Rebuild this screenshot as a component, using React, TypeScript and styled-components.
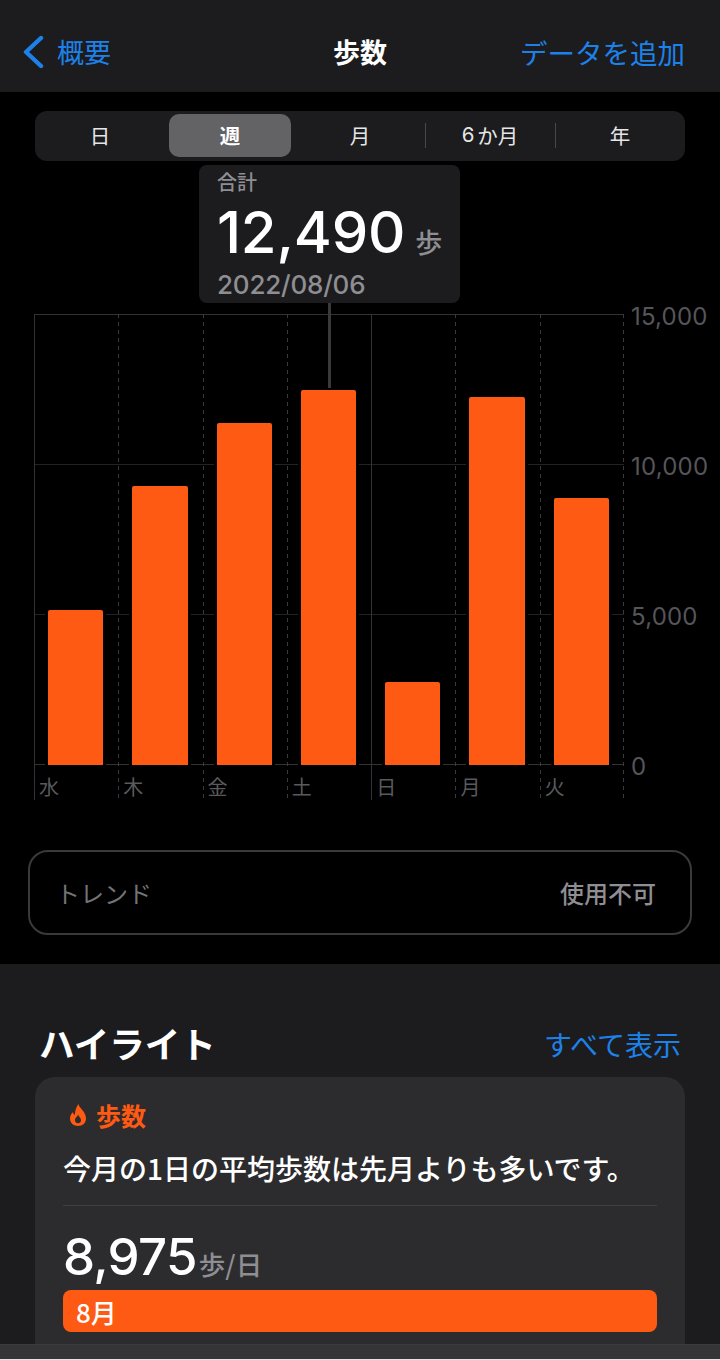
import React from "react";
import styled, { createGlobalStyle } from "styled-components";

const Global = createGlobalStyle`
  html, body { margin: 0; padding: 0; background: #000; }
  body { font-family: "Liberation Sans", "Noto Sans CJK JP", sans-serif; }
  * { box-sizing: border-box; }
`;
const jp = `"Noto Sans CJK JP", sans-serif`;
const num = `Inter, "Noto Sans CJK JP", sans-serif`;
const blue = "#1c82ea";
const orange = "#ff5a13";
const dashed = `linear-gradient(to bottom, #3a3a3c 50%, transparent 50%)`;

const Page = styled.div`
  width: 720px; height: 1360px; overflow: hidden; display: flex; flex-direction: column;
  background: #000; position: relative;
`;
const NavBar = styled.header`
  height: 92px; flex: none; background: #1c1c1e; display: grid;
  grid-template-columns: 1fr auto 1fr; align-items: center; padding: 12px 35px 0;
  font-family: ${jp}; font-size: 27px; line-height: 32px;
`;
const Back = styled.div`
  display: flex; align-items: center; gap: 13px; color: ${blue}; font-weight: 400; margin-left: -13px;
`;
const NavTitle = styled.div` color: #fff; font-weight: 700; `;
const NavAction = styled.div` color: ${blue}; font-weight: 400; font-size: 27.5px; text-align: right; white-space: nowrap; `;

const Main = styled.section`
  height: 872px; flex: none; background: #000; padding: 19px 35px 0;
  display: flex; flex-direction: column;
`;
const Segments = styled.div`
  height: 50px; background: #1c1c1e; border-radius: 12px; display: grid;
  grid-template-columns: repeat(5, 1fr); padding: 3px 0 4px; align-items: stretch;
`;
const Segment = styled.div<{ $active?: boolean; $divider?: boolean }>`
  position: relative; display: flex; align-items: center; justify-content: center;
  font-family: ${jp}; font-size: 20.5px; margin: 0 4px; border-radius: 10px; padding-bottom: 2px;
  background: ${(p) => (p.$active ? "#636366" : "transparent")};
  font-weight: ${(p) => (p.$active ? 700 : 400)};
  color: ${(p) => (p.$active ? "#fff" : "#e6e6e7")};
  &::before {
    content: ""; display: ${(p) => (p.$divider ? "block" : "none")};
    position: absolute; left: -4px; top: 9px; bottom: 9px; width: 1px; background: #48484a;
  }
`;
const SixDigit = styled.span` font-family: ${num}; margin-right: 3px; `;

const Tooltip = styled.div`
  align-self: flex-start; margin: 4px 0 0 164px; width: 261px; height: 138px;
  background: #1c1c1e; border-radius: 8px; padding: 4px 18px 0; position: relative; z-index: 2;
  &::after {
    content: ""; position: absolute; left: 129px; top: 100%; width: 3px; height: 85px;
    background: #3a3a3c;
  }
`;
const TipLabel = styled.div`
  font-family: ${jp}; font-size: 20px; line-height: 26px; color: #8e8e93; font-weight: 500;
`;
const TipValueRow = styled.div`
  display: flex; align-items: baseline; gap: 10px; height: 62px; margin-top: 6px;
`;
const TipValue = styled.span`
  font-family: ${num}; font-size: 58px; line-height: 62px; color: #fff; font-weight: 500; letter-spacing: -0.2px;
`;
const TipUnit = styled.span`
  font-family: ${jp}; font-size: 27px; color: #8e8e93; font-weight: 500;
`;
const TipDate = styled.div`
  font-family: ${num}; font-size: 26px; line-height: 34px; color: #8e8e93; font-weight: 500; margin-top: 5px; letter-spacing: -0.2px;
`;

const ChartRow = styled.div`
  display: flex; margin-top: 11px; margin-left: -1px; height: 484px;
`;
const Plot = styled.div`
  width: 590px; flex: none; height: 484px; position: relative;
  display: grid; grid-template-columns: repeat(7, 1fr);
  &::after {
    content: ""; position: absolute; right: 0; top: 0; bottom: 0; width: 1px;
    background: ${dashed} 0 0 / 1px 8px repeat-y;
  }
`;
const HLines = styled.div`
  position: absolute; left: 0; right: 0; top: 0; height: 451px; display: flex;
  flex-direction: column; justify-content: space-between; pointer-events: none;
`;
const HLine = styled.div<{ $strong?: boolean }>`
  height: 1px; background: ${(p) => (p.$strong ? "#333335" : "#232325")};
`;
const DayCol = styled.div<{ $solid?: boolean }>`
  position: relative; display: flex; flex-direction: column; padding-left: 1px;
  background: ${(p) => (p.$solid ? "linear-gradient(#333335, #333335) 0 0 / 1px 100% no-repeat" : `${dashed} 0 0 / 1px 8px repeat-y`)};
`;
const BarSlot = styled.div`
  height: 451px; display: flex; align-items: flex-end; padding: 0 15px 0 13px;
`;
const Bar = styled.div`
  width: 100%; background: ${orange}; border-radius: 2px 2px 0 0; position: relative;
  box-shadow: 0 0 0 3px #000;
`;
const DayLabel = styled.div`
  font-family: ${jp}; font-size: 20px; line-height: 26px; color: #5a5a5e; padding-left: 4px; margin-top: 9px;
`;
const YAxis = styled.div`
  height: 451px; display: flex; flex-direction: column; justify-content: space-between;
  margin: 1.5px 0 0 7px;
`;
const YTick = styled.div`
  font-family: ${num}; font-size: 24px; line-height: 1px; height: 1px; color: #55555a; font-weight: 400; letter-spacing: 0.2px;
`;

const Trend = styled.div`
  margin: 52px -7px 0; height: 85px; border: 2px solid #3a3a3c; border-radius: 20px;
  display: flex; align-items: center; justify-content: space-between; padding: 0 34px 0 26px;
  font-family: ${jp}; font-size: 24px;
`;
const TrendLabel = styled.span` color: #737377; font-weight: 400; `;
const TrendValue = styled.span` color: #8e8e93; font-weight: 500; `;

const Lower = styled.section`
  flex: 1; min-height: 0; background: #1c1c1e; padding: 54px 35px 0; display: flex; flex-direction: column; position: relative;
`;
const LowerHead = styled.div`
  display: flex; align-items: center; justify-content: space-between; height: 50px; padding: 0 4px 0 4px;
`;
const LowerTitle = styled.h2`
  margin: 0; font-family: ${jp}; font-size: 35.5px; line-height: 50px; color: #fff; font-weight: 700;
`;
const LowerLink = styled.a` font-family: ${jp}; font-size: 28px; color: ${blue}; font-weight: 400; margin-top: 2px; `;
const Card = styled.div`
  margin-top: 9px; flex: 1; min-height: 0; background: #2c2c2e; border-radius: 20px 20px 0 0; padding: 20px 28px 0;
`;
const CardHead = styled.div`
  display: flex; align-items: center; gap: 8px; height: 36px; padding-left: 5px;
  font-family: ${jp}; font-size: 25px; font-weight: 700; color: ${orange};
`;
const CardText = styled.p`
  margin: 15px 0 0; font-family: ${jp}; font-size: 28px; line-height: 40px; font-weight: 500; color: #fff; white-space: nowrap;
`;
const Rule = styled.div` height: 1px; background: #3f3f41; margin-top: 17px; `;
const Stat = styled.div` display: flex; align-items: baseline; gap: 2px; margin-top: 23px; height: 56px; `;
const StatValue = styled.span`
  font-family: ${num}; font-size: 51px; line-height: 56px; font-weight: 500; color: #fff; letter-spacing: -0.7px;
`;
const StatUnit = styled.span` font-family: ${jp}; font-size: 26.5px; color: #8e8e93; font-weight: 500; `;
const MonthBar = styled.div`
  margin-top: 5px; height: 42px; background: ${orange}; border-radius: 8px; padding-left: 13px;
  display: flex; align-items: center; font-family: ${jp}; font-size: 26px; font-weight: 500; color: #fff;
`;
const BottomBar = styled.div`
  position: absolute; left: 0; right: 0; bottom: 0; height: 16px; background: #353537;
  border-top: 1px solid #3c3c3e; border-bottom: 1px solid #e4e4e4;
`;

const bars = [
  { d: "水", h: 155 }, { d: "木", h: 279 }, { d: "金", h: 342 }, { d: "土", h: 375 },
  { d: "日", h: 83, solid: true }, { d: "月", h: 368 }, { d: "火", h: 267 },
];
const segs = ["日", "週", "月", "6か月", "年"];

export default function App() {
  return (
    <Page>
      <Global />
      <NavBar>
        <Back>
          <svg width="22" height="34" viewBox="0 0 22 34" fill="none">
            <path d="M19 3 L4 17 L19 31" stroke={blue} strokeWidth="4.4" strokeLinecap="round" strokeLinejoin="round" />
          </svg>
          概要
        </Back>
        <NavTitle>歩数</NavTitle>
        <NavAction>データを追加</NavAction>
      </NavBar>
      <Main>
        <Segments>
          {segs.map((s, i) => (
            <Segment key={s} $active={i === 1} $divider={i === 3 || i === 4}>
              {s === "6か月" ? (<><SixDigit>6</SixDigit>か月</>) : s}
            </Segment>
          ))}
        </Segments>
        <Tooltip>
          <TipLabel>合計</TipLabel>
          <TipValueRow>
            <TipValue>12,490</TipValue>
            <TipUnit>歩</TipUnit>
          </TipValueRow>
          <TipDate>2022/08/06</TipDate>
        </Tooltip>
        <ChartRow>
          <Plot>
            <HLines>
              <HLine $strong /><HLine /><HLine /><HLine $strong />
            </HLines>
            {bars.map((b) => (
              <DayCol key={b.d} $solid={b.solid || b.d === "水"}>
                <BarSlot><Bar style={{ height: b.h }} /></BarSlot>
                <DayLabel>{b.d}</DayLabel>
              </DayCol>
            ))}
          </Plot>
          <YAxis>
            {["15,000", "10,000", "5,000", "0"].map((t) => <YTick key={t}>{t}</YTick>)}
          </YAxis>
        </ChartRow>
        <Trend>
          <TrendLabel>トレンド</TrendLabel>
          <TrendValue>使用不可</TrendValue>
        </Trend>
      </Main>
      <Lower>
        <LowerHead>
          <LowerTitle>ハイライト</LowerTitle>
          <LowerLink>すべて表示</LowerLink>
        </LowerHead>
        <Card>
          <CardHead>
            <svg width="20" height="24" viewBox="0 0 20 24">
              <path fillRule="evenodd" fill={orange} d="M10.5 1C11 5 17.5 8 18 15c.3 5-3.5 8-8 8s-8-3-8-7.5c0-3 1.5-5 3-6.5.2 1.5.8 2.5 1.8 3C7 8 8 4 10.5 1ZM10 11.5c-.2 2-3 3-3 5.8 0 1.8 1.3 3 3 3s3-1.2 3-3c0-2.6-2.4-3.6-3-5.8Z" />
            </svg>
            歩数
          </CardHead>
          <CardText>今月の1日の平均歩数は先月よりも多いです。</CardText>
          <Rule />
          <Stat>
            <StatValue>8,975</StatValue>
            <StatUnit>歩/日</StatUnit>
          </Stat>
          <MonthBar>8月</MonthBar>
        </Card>
        <BottomBar />
      </Lower>
    </Page>
  );
}
